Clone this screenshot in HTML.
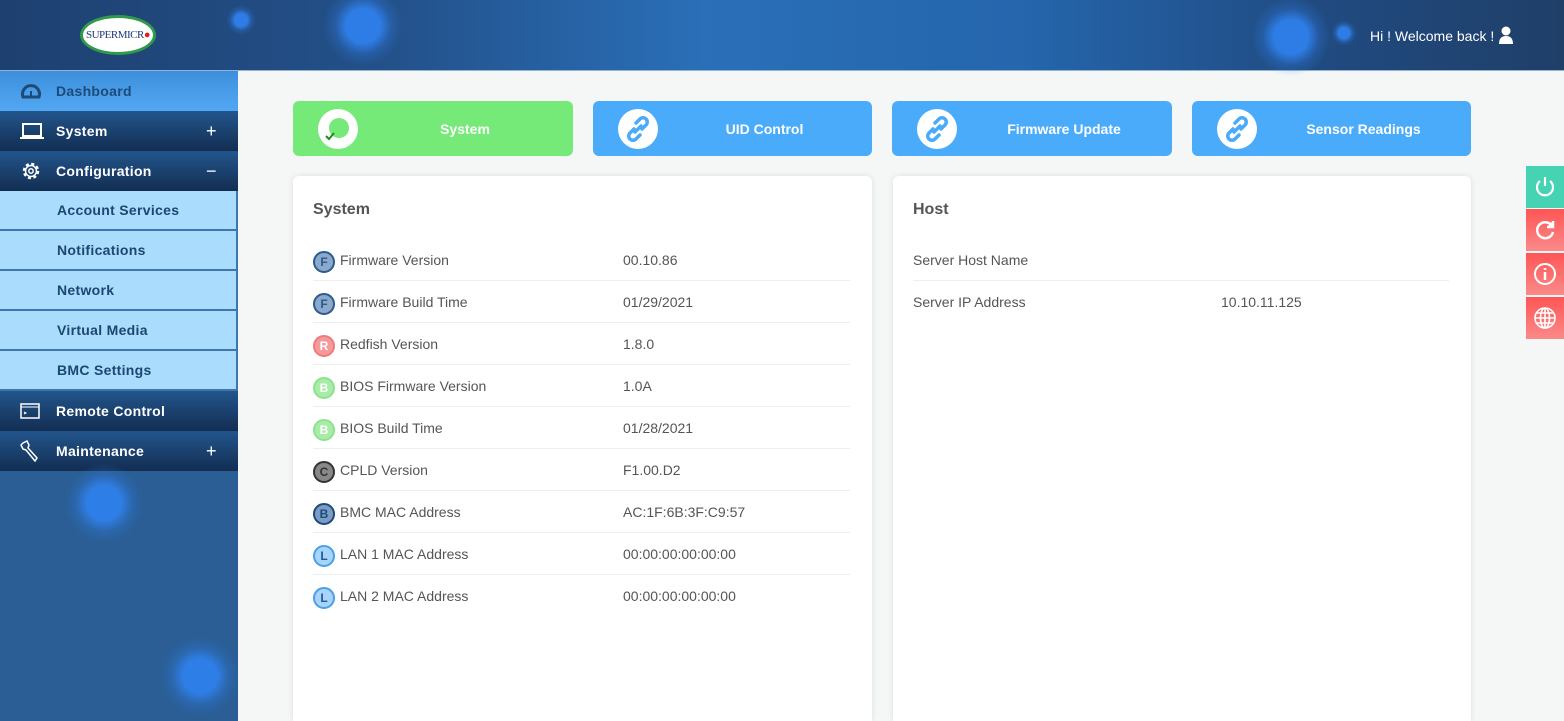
<!DOCTYPE html>
<html><head><meta charset="utf-8"><style>
*{box-sizing:border-box;margin:0;padding:0}
html,body{width:1564px;height:721px;overflow:hidden}
body{background:#f4f7f6;font-family:"Liberation Sans",sans-serif;position:relative}
.hdr{position:absolute;left:0;top:0;width:1564px;height:71px;background:linear-gradient(90deg,#1e4070 0%,#23518a 25%,#2a6fb8 45%,#2566ad 65%,#204a80 85%,#1f3f68 100%);border-bottom:1px solid #8fb4d8}
.glow{position:absolute;border-radius:50%;background:radial-gradient(circle,rgba(47,130,240,.9) 0 30%,rgba(47,130,240,.25) 50%,rgba(47,130,240,0) 70%)}
.logo{position:absolute;left:80px;top:15px;width:76px;height:40px;border-radius:50%;background:#fff;border:3px solid #2f9a4a;font-family:"Liberation Serif",serif;font-size:11px;color:#1a3a7a;text-align:center;line-height:34px;letter-spacing:-.5px}
.welcome{position:absolute;left:1370px;top:26px;color:#fff;font-size:14px}
.side{position:absolute;left:0;top:71px;width:238px;height:650px;background:#2a5e95;overflow:hidden}
.it{height:40px;display:flex;align-items:center;font-weight:bold;font-size:14px;color:#fff;background:linear-gradient(#22558c,#132e52);position:relative;letter-spacing:.3px}
.it .t{position:absolute;left:56px}
.it .pl{position:absolute;left:206px;font-size:18px;font-weight:normal}
.it svg{position:absolute;left:20px}
.dash{background:linear-gradient(#3d8fdb,#52a7f3);color:#1e4a78}
.sub{height:40px;background:#a9dcfd;color:#1d4670;font-weight:bold;font-size:14px;display:flex;align-items:center;padding-left:57px;border-bottom:2px solid #3f77ad;border-right:2px solid #3f77ad;letter-spacing:.3px}
.tile{position:absolute;top:101px;height:55px;border-radius:6px;background:#4aabfb;color:#fff;font-weight:bold;font-size:14px}
.tile .c{position:absolute;left:25px;top:8px;width:40px;height:40px;border-radius:50%;background:#fff}
.tile .l{position:absolute;left:0;right:0;top:20px;text-align:center;padding-left:64px}
.panel{position:absolute;top:176px;height:545px;background:#fff;border-radius:6px 6px 0 0;box-shadow:0 0 6px rgba(0,0,0,.1)}
.panel h3{position:absolute;left:20px;top:25px;font-size:16px;color:#555;font-weight:bold}
.row{position:absolute;left:20px;right:22px;height:42px;border-bottom:1px solid #eee;font-size:14px;color:#555}
.row span{position:absolute;top:13px}
.ic{position:absolute;left:0;top:12px;width:22px;height:22px;border-radius:50%;border:2px solid;font-size:12px;font-weight:bold;text-align:center;line-height:18px;font-style:normal}
.rb{position:absolute;left:1526px;width:38px;height:42px;display:flex;align-items:center;justify-content:center}
</style></head><body>
<div class="hdr">
<div class="glow" style="left:226px;top:5px;width:30px;height:30px"></div>
<div class="glow" style="left:323px;top:-14px;width:80px;height:80px"></div>
<div class="glow" style="left:1251px;top:-3px;width:80px;height:80px"></div>
<div class="glow" style="left:1331px;top:20px;width:26px;height:26px"></div>
<div class="logo">SUPERMICR<span style="color:#d22">●</span></div>
<div class="welcome">Hi ! Welcome back ! <svg width="16" height="18" viewBox="0 0 16 18" style="vertical-align:-3px"><circle cx="8" cy="5" r="4.5" fill="#fff"/><path d="M1 18 Q1 10 8 10 Q15 10 15 18Z" fill="#fff"/></svg></div>
</div>
<div class="side">
<div class="it dash"><svg width="22" height="18" viewBox="0 0 22 18"><path d="M3 15 A8.5 8.5 0 1 1 19 15 Z" fill="none" stroke="#1e4a78" stroke-width="3"/><path d="M11 9v5" stroke="#1e4a78" stroke-width="2"/></svg><span class="t">Dashboard</span></div>
<div class="it"><svg width="24" height="18" viewBox="0 0 24 18"><rect x="3" y="2" width="18" height="12" fill="none" stroke="#fff" stroke-width="2"/><path d="M0 16h24" stroke="#fff" stroke-width="2"/></svg><span class="t">System</span><span class="pl">+</span></div>
<div class="it"><svg width="22" height="22" viewBox="0 0 22 22"><circle cx="11" cy="11" r="7" fill="none" stroke="#fff" stroke-width="2.5" stroke-dasharray="3 2.5"/><circle cx="11" cy="11" r="5.5" fill="none" stroke="#fff" stroke-width="1.5"/><circle cx="11" cy="11" r="2.2" fill="none" stroke="#fff" stroke-width="1.5"/></svg><span class="t">Configuration</span><span class="pl">−</span></div>
<div class="sub">Account Services</div>
<div class="sub">Notifications</div>
<div class="sub">Network</div>
<div class="sub">Virtual Media</div>
<div class="sub">BMC Settings</div>
<div class="it"><svg width="20" height="16" viewBox="0 0 20 16"><rect x="1" y="1" width="18" height="14" fill="none" stroke="#fff" stroke-width="1.5"/><path d="M1 4h18M4 9l2 1-2 1" stroke="#fff" fill="none"/></svg><span class="t">Remote Control</span></div>
<div class="it"><svg width="20" height="22" viewBox="0 0 20 22"><path d="M3 3 L7 1 L9 5 L8 8 L17 18 L15 21 L6 10 L3 9 L1 5 Z" fill="none" stroke="#fff" stroke-width="1.5"/></svg><span class="t">Maintenance</span><span class="pl">+</span></div>
<div class="glow" style="left:64px;top:392px;width:80px;height:80px"></div>
<div class="glow" style="left:160px;top:565px;width:80px;height:80px"></div>
</div>

<div class="tile" style="left:293px;width:280px;background:#76ea79"><div class="c"><svg width="40" height="40" viewBox="0 0 40 40"><circle cx="21" cy="19" r="10" fill="#76ea79"/><path d="M8 27l3 3 5-6" stroke="#1a8a2a" stroke-width="2" fill="none"/></svg></div><div class="l">System</div></div>
<div class="tile" style="left:593px;width:279px"><div class="c"><svg width="40" height="40" viewBox="0 0 40 40"><g fill="none" stroke="#4aabfb" stroke-width="3.5" stroke-linecap="round"><path d="M18 14l4-4a4 4 0 0 1 6 6l-4 4"/><path d="M22 26l-4 4a4 4 0 0 1-6-6l4-4"/><path d="M17 23l6-6"/></g></svg></div><div class="l">UID Control</div></div>
<div class="tile" style="left:892px;width:280px"><div class="c"><svg width="40" height="40" viewBox="0 0 40 40"><g fill="none" stroke="#4aabfb" stroke-width="3.5" stroke-linecap="round"><path d="M18 14l4-4a4 4 0 0 1 6 6l-4 4"/><path d="M22 26l-4 4a4 4 0 0 1-6-6l4-4"/><path d="M17 23l6-6"/></g></svg></div><div class="l">Firmware Update</div></div>
<div class="tile" style="left:1192px;width:279px"><div class="c"><svg width="40" height="40" viewBox="0 0 40 40"><g fill="none" stroke="#4aabfb" stroke-width="3.5" stroke-linecap="round"><path d="M18 14l4-4a4 4 0 0 1 6 6l-4 4"/><path d="M22 26l-4 4a4 4 0 0 1-6-6l4-4"/><path d="M17 23l6-6"/></g></svg></div><div class="l">Sensor Readings</div></div>

<div class="panel" style="left:293px;width:579px"><h3>System</h3>
<div class="row" style="top:63px"><b class="ic" style="border-color:#2c5a8a;color:#2c5a8a;background:#8aa9cc">F</b><span style="left:27px">Firmware Version</span><span style="left:310px">00.10.86</span></div>
<div class="row" style="top:105px"><b class="ic" style="border-color:#2c5a8a;color:#2c5a8a;background:#8aa9cc">F</b><span style="left:27px">Firmware Build Time</span><span style="left:310px">01/29/2021</span></div>
<div class="row" style="top:147px"><b class="ic" style="border-color:#f07a7a;color:#fff;background:#f59a9a">R</b><span style="left:27px">Redfish Version</span><span style="left:310px">1.8.0</span></div>
<div class="row" style="top:189px"><b class="ic" style="border-color:#8ee28e;color:#fff;background:#a8eca8">B</b><span style="left:27px">BIOS Firmware Version</span><span style="left:310px">1.0A</span></div>
<div class="row" style="top:231px"><b class="ic" style="border-color:#8ee28e;color:#fff;background:#a8eca8">B</b><span style="left:27px">BIOS Build Time</span><span style="left:310px">01/28/2021</span></div>
<div class="row" style="top:273px"><b class="ic" style="border-color:#333;color:#333;background:#888">C</b><span style="left:27px">CPLD Version</span><span style="left:310px">F1.00.D2</span></div>
<div class="row" style="top:315px"><b class="ic" style="border-color:#1e4a78;color:#1e4a78;background:#7a9cc6">B</b><span style="left:27px">BMC MAC Address</span><span style="left:310px">AC:1F:6B:3F:C9:57</span></div>
<div class="row" style="top:357px"><b class="ic" style="border-color:#4aa0e8;color:#1e5a98;background:#a8d4fa">L</b><span style="left:27px">LAN 1 MAC Address</span><span style="left:310px">00:00:00:00:00:00</span></div>
<div class="row" style="top:399px;border:none"><b class="ic" style="border-color:#4aa0e8;color:#1e5a98;background:#a8d4fa">L</b><span style="left:27px">LAN 2 MAC Address</span><span style="left:310px">00:00:00:00:00:00</span></div>
</div>
<div class="panel" style="left:893px;width:578px"><h3>Host</h3>
<div class="row" style="top:63px"><span style="left:0">Server Host Name</span></div>
<div class="row" style="top:105px;border:none"><span style="left:0">Server IP Address</span><span style="left:308px">10.10.11.125</span></div>
</div>

<div class="rb" style="top:166px;background:#45d3b3"><svg width="24" height="24" viewBox="0 0 24 24" fill="none" stroke="#fff" stroke-width="2.2"><path d="M7 6a8 8 0 1 0 10 0"/><path d="M12 2v9"/></svg></div>
<div class="rb" style="top:209px;background:linear-gradient(#f55,#fa8a8a)"><svg width="24" height="24" viewBox="0 0 24 24" fill="none" stroke="#fff" stroke-width="2.5"><path d="M19 8a8 8 0 1 0 1 6"/><path d="M14 9h6V3" fill="#fff"/></svg></div>
<div class="rb" style="top:253px;background:linear-gradient(#f55,#fa8a8a)"><svg width="24" height="24" viewBox="0 0 24 24" fill="none" stroke="#fff" stroke-width="2"><circle cx="12" cy="12" r="10"/><path d="M12 10v8M12 6v2" stroke-width="2.5"/></svg></div>
<div class="rb" style="top:297px;background:linear-gradient(#f55,#fa8a8a)"><svg width="24" height="24" viewBox="0 0 24 24" fill="none" stroke="#fff" stroke-width="1.6"><circle cx="12" cy="12" r="10"/><ellipse cx="12" cy="12" rx="4.5" ry="10"/><path d="M2 12h20M4 7h16M4 17h16M12 2v20"/></svg></div>
</body></html>
